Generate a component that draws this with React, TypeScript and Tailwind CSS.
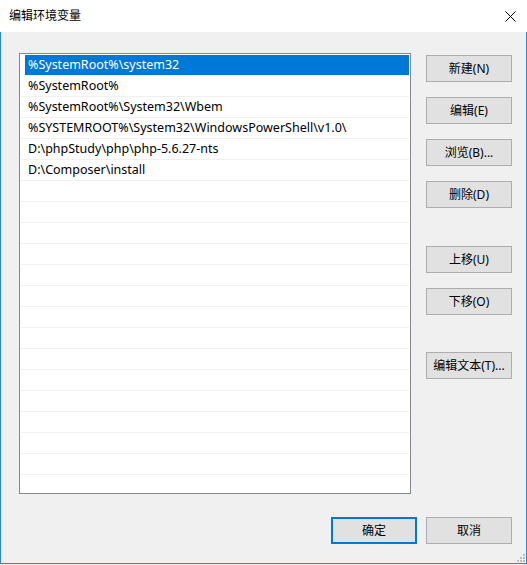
import { useState } from "react";

const paths = [
  "%SystemRoot%\\system32",
  "%SystemRoot%",
  "%SystemRoot%\\System32\\Wbem",
  "%SYSTEMROOT%\\System32\\WindowsPowerShell\\v1.0\\",
  "D:\\phpStudy\\php\\php-5.6.27-nts",
  "D:\\Composer\\install",
];

const font = { fontFamily: '"Noto Sans", "Noto Sans CJK SC", sans-serif' };

function Btn({ label, className = "", primary = false }: { label: string; className?: string; primary?: boolean }) {
  return (
    <button
      className={`flex h-[27px] w-[86px] items-center justify-center bg-[#e1e1e1] text-[12px] text-black ${primary ? "border-2 border-[#0078d7]" : "border border-[#adadad]"} ${className}`}
    >
      {label}
    </button>
  );
}

export default function App() {
  const [selected, setSelected] = useState(0);
  const rows = Array.from({ length: 22 }, (_, i) => paths[i] ?? "");

  return (
    <div className="h-[565px] w-[527px] overflow-hidden bg-[#f0f0f0]" style={font}>
      <div className="flex h-[564px] w-[527px] flex-col border-x border-b border-[#2a87d6] bg-[#f0f0f0]">
        {/* title bar */}
        <div className="-mx-px flex h-[32px] shrink-0 items-center justify-between bg-white pl-[9px] pr-[10px]">
          <span className="text-[12px] text-black">编辑环境变量</span>
          <svg width="11" height="11" viewBox="0 0 11 11" className="mr-[1px]">
            <path d="M0.5 0.5L10.5 10.5M10.5 0.5L0.5 10.5" stroke="#000" strokeWidth="1" />
          </svg>
        </div>

        <div className="flex pl-[18px] pt-[21px]">
          {/* list */}
          <div className="h-[441px] w-[392px] overflow-hidden border border-[#828790] bg-white p-px">
            {rows.map((p, i) => (
              <div
                key={i}
                onClick={() => p && setSelected(i)}
                className={`flex h-[21px] items-center border-b border-[#f0f0f0] text-[12.5px] ${i === selected ? "ml-[4px] mr-0 bg-[#0078d7] pl-[3px] text-white" : "pl-[7px] text-black"}`}
              >
                {p}
              </div>
            ))}
          </div>

          {/* side buttons */}
          <div className="ml-[15px] mt-[2px] flex flex-col">
            <Btn label="新建(N)" />
            <Btn label="编辑(E)" className="mt-[15px]" />
            <Btn label="浏览(B)..." className="mt-[15px]" />
            <Btn label="删除(D)" className="mt-[15px]" />
            <Btn label="上移(U)" className="mt-[38px]" />
            <Btn label="下移(O)" className="mt-[15px]" />
            <Btn label="编辑文本(T)..." className="mt-[37px]" />
          </div>
        </div>

        {/* bottom */}
        <div className="relative flex flex-1 justify-end pr-[14px] pt-[23px]">
          <Btn label="确定" primary />
          <Btn label="取消" className="ml-[9px]" />
          <svg width="8" height="8" viewBox="0 0 8 8" className="absolute bottom-[1px] right-[1px]">
            <rect x="6" y="0" width="2" height="2" fill="#bcbcbc" />
            <rect x="3" y="3" width="2" height="2" fill="#bcbcbc" />
            <rect x="6" y="3" width="2" height="2" fill="#bcbcbc" />
            <rect x="0" y="6" width="2" height="2" fill="#bcbcbc" />
            <rect x="3" y="6" width="2" height="2" fill="#bcbcbc" />
            <rect x="6" y="6" width="2" height="2" fill="#bcbcbc" />
          </svg>
        </div>
      </div>
    </div>
  );
}
